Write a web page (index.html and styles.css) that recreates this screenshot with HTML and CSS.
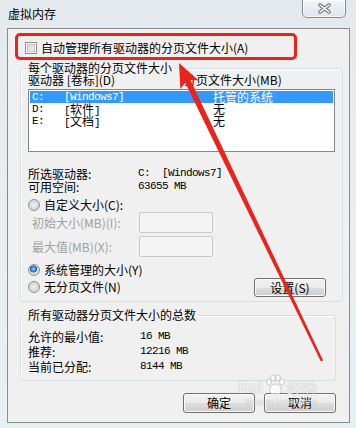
FILE: index.html
```html
<!DOCTYPE html>
<html lang="zh-CN">

<head>
    <meta charset="UTF-8">
    <meta name="viewport" content="width=device-width, initial-scale=1.0">
    <title>虚拟内存</title>

    <link rel="stylesheet" href="styles.css">
</head>

<body>
    <div class="window">
        <div class="titlebar">
            <span class="title">虚拟内存</span>
            <button class="close">
                <svg width="13" height="11" viewBox="0 0 13 11">
                    <path d="M2 2 L11 9 M11 2 L2 9" stroke="#6f7b86" stroke-width="3.6" stroke-linecap="round" />
                    <path d="M2 2 L11 9 M11 2 L2 9" stroke="#ffffff" stroke-width="1.5" stroke-linecap="round" />
                </svg>
            </button>
        </div>

        <div class="client">
            <label class="auto-row">
                <span class="checkbox"></span>
                <span>自动管理所有驱动器的分页文件大小(A)</span>
            </label>

            <fieldset class="group drives">
                <legend>每个驱动器的分页文件大小</legend>
                <div class="list-head">
                    <span class="head-drive">驱动器 [卷标](D)</span>
                    <span>分页文件大小(MB)</span>
                </div>
                <div class="listbox">
                    <div class="row selected">
                        <span class="c-drive mono">C:</span>
                        <span class="c-label mono">[Windows7]</span>
                        <span>托管的系统</span>
                    </div>
                    <div class="row">
                        <span class="c-drive mono">D:</span>
                        <span class="c-label"><span class="mono">[</span>软件<span class="mono">]</span></span>
                        <span>无</span>
                    </div>
                    <div class="row">
                        <span class="c-drive mono">E:</span>
                        <span class="c-label"><span class="mono">[</span>文档<span class="mono">]</span></span>
                        <span>无</span>
                    </div>
                </div>

                <div class="info">
                    <span>所选驱动器:</span>
                    <span class="mono">C:&nbsp;&nbsp;[Windows7]</span>
                    <span>可用空间:</span>
                    <span class="mono">63655 MB</span>
                </div>

                <label class="radio-row custom">
                    <span class="radio"></span>
                    <span>自定义大小(C):</span>
                </label>
                <div class="size-row first">
                    <span class="disabled">初始大小(MB)(I):</span>
                    <span class="textbox"></span>
                </div>
                <div class="size-row">
                    <span class="disabled">最大值(MB)(X):</span>
                    <span class="textbox"></span>
                </div>

                <div class="mode-block">
                    <div class="mode-list">
                        <label class="radio-row">
                            <span class="radio checked"></span>
                            <span>系统管理的大小(Y)</span>
                        </label>
                        <label class="radio-row second">
                            <span class="radio"></span>
                            <span>无分页文件(N)</span>
                        </label>
                    </div>
                    <button class="btn set-btn">设置(S)</button>
                </div>
            </fieldset>

            <fieldset class="group totals">
                <legend>所有驱动器分页文件大小的总数</legend>
                <div class="totals-grid">
                    <span>允许的最小值:</span>
                    <span class="mono">16 MB</span>
                    <span>推荐:</span>
                    <span class="mono">12216 MB</span>
                    <span>当前已分配:</span>
                    <span class="mono">8144 MB</span>
                </div>
            </fieldset>

            <div class="actions">
                <button class="btn">确定</button>
                <button class="btn">取消</button>
            </div>
        </div>

        <!-- 標註框與箭頭 -->
        <div class="mark-box"></div>
        <svg class="mark-arrow" width="356" height="428" viewBox="0 0 356 428">
            <polygon points="184.1,80.5 189.5,77.9 323.1,360.5 320.9,361.5" fill="#e8241b" />
            <polygon points="179,63 198.4,80.3 187.2,80.1 180.4,88.9" fill="#e8241b" />
        </svg>

        <div class="watermark">
            <div class="wm-top">
                <span class="wm-bai">Bai</span>
                <svg class="wm-paw" width="22" height="22" viewBox="0 0 22 22">
                    <g fill="rgba(255,255,255,0.85)" stroke="rgba(120,120,120,0.45)" stroke-width="0.8">
                        <ellipse cx="5" cy="8" rx="2.4" ry="3" />
                        <ellipse cx="9" cy="4" rx="2.4" ry="3" />
                        <ellipse cx="14" cy="4" rx="2.4" ry="3" />
                        <ellipse cx="18" cy="8" rx="2.4" ry="3" />
                        <path d="M11.5 10 C7 10 5 15 6 18 C7 21 10 19.5 11.5 19.5 C13 19.5 16 21 17 18 C18 15 16 10 11.5 10 Z" />
                    </g>
                </svg>
                <span class="wm-jy">经验</span>
            </div>
            <div class="wm-url">jingyan.baidu.com</div>
        </div>
    </div>
</body>

</html>
```

FILE: styles.css
```css
body {
    margin: 0;
    font-family: "Noto Sans CJK SC", "Noto Sans", sans-serif;
    font-size: 12px;
    color: #000000;
}

.window {
    position: relative;
    width: 356px;
    height: 428px;
    overflow: hidden;

    background: linear-gradient(to bottom, #e4e9ee 0%, #e9eef2 60%, #e4f1f4 100%);

    display: flex;
    flex-direction: column;
}

.mono {
    font-family: "Liberation Mono", monospace;
    font-size: 11px;
    letter-spacing: -0.6px;
}

/* 標題列 */
.titlebar {
    height: 28px;
    flex: none;
    padding: 0 10px 0 8px;

    display: flex;
    justify-content: space-between;
    align-items: flex-start;
}

.titlebar .title {
    margin-top: 8px;
    line-height: 12px;
}

.titlebar .close {
    width: 44px;
    height: 18px;
    padding: 0;

    border: 1px solid #7f8b97;
    border-top: none;
    border-radius: 0 0 5px 5px;
    background: linear-gradient(to bottom, #f4f6f8, #dfe5ea);
    box-shadow: inset 0 0 0 1px rgba(255, 255, 255, 0.7);

    display: flex;
    justify-content: center;
    align-items: center;
}

/* 內容區 */
.client {
    box-sizing: border-box;
    width: 343px;
    height: 395px;
    margin-left: 7px;
    padding: 12px 0 0 12px;

    border: 1px solid #8b8b8b;
    background-color: #f0f0f0;
}

.auto-row {
    height: 13px;
    margin-left: 5px;

    display: flex;
    align-items: center;
    gap: 4px;
    line-height: 13px;
}

.checkbox {
    box-sizing: border-box;
    width: 12px;
    height: 12px;

    border: 1px solid #8e8f8f;
    background: linear-gradient(135deg, #cfcfcf, #f6f6f6);
    box-shadow: inset 0 0 0 1px #f4f4f4, inset 0 0 0 2px #c8c8c8;
}

/* 群組框 */
.group {
    box-sizing: border-box;
    margin: 0;
    min-width: 0;
    padding: 0 7px 4px;

    border: 1px solid #d5dfe5;
    border-radius: 3px;
    box-shadow: inset 1px 1px 0 #ffffff;
}

.group legend {
    padding: 0 2px;
    margin-left: -2px;
    line-height: 12px;
}

.drives {
    width: 323px;
    margin-top: 8px;
}

.list-head {
    display: flex;
    line-height: 12px;
}

.head-drive {
    width: 156px;
}

.listbox {
    box-sizing: border-box;
    height: 63px;
    margin-top: 3px;
    padding: 1px;

    border: 1px solid #828790;
    background-color: #ffffff;
}

.listbox .row {
    height: 12px;
    padding-left: 2px;
    line-height: 12px;

    display: flex;
}

.listbox .row.selected {
    background-color: #3399ff;
    color: #ffffff;
}

.c-drive {
    width: 32px;
}

.c-label {
    width: 149px;
}

.info {
    margin-top: 15px;
    line-height: 13px;

    display: grid;
    grid-template-columns: 110px auto;
}

.radio-row {
    height: 12px;
    line-height: 12px;

    display: flex;
    align-items: center;
    gap: 4px;
}

.radio-row.custom {
    margin-top: 6px;
}

.radio-row.second {
    margin-top: 5px;
}

.radio {
    box-sizing: border-box;
    width: 12px;
    height: 12px;

    border: 1px solid #8e8f8f;
    border-radius: 50%;
    background: radial-gradient(circle at 50% 50%, #f2f2f2 0%, #d6d6d6 60%, #f6f6f6 100%);
}

.radio.checked {
    background:
        radial-gradient(circle at 45% 40%, #9fd0ff 0%, #3a86d8 28%, #1d5fa8 42%, transparent 45%),
        radial-gradient(circle at 50% 50%, #f2f2f2 0%, #d6d6d6 60%, #f6f6f6 100%);
}

.size-row {
    height: 21px;
    margin-top: 3px;
    padding-left: 4px;

    display: grid;
    grid-template-columns: 107px 74px;
    align-items: center;
}

.size-row.first {
    margin-top: 1px;
}

.disabled {
    color: #a0a0a0;
}

.textbox {
    box-sizing: border-box;
    height: 21px;

    border: 1px solid #c9c9c9;
    border-radius: 2px;
    background-color: #f4f4f4;
}

.mode-block {
    height: 33px;
    margin-top: 7px;

    display: flex;
    justify-content: space-between;
}

.btn {
    box-sizing: border-box;
    width: 72px;
    height: 20px;
    padding: 0;

    font-family: inherit;
    font-size: 12px;
    line-height: 16px;
    color: #000000;

    border: 1px solid #707070;
    border-radius: 3px;
    background: linear-gradient(to bottom, #f2f2f2 0%, #ebebeb 50%, #dddddd 51%, #cfcfcf 100%);
    box-shadow: inset 0 0 0 1px #fbfbfb;
}

.set-btn {
    align-self: flex-end;
    height: 19px;
    margin-right: 9px;
}

.totals {
    width: 316px;
    margin-top: 7px;
    padding-top: 8px;
    padding-bottom: 6px;
}

.totals-grid {
    line-height: 15px;

    display: grid;
    grid-template-columns: 112px auto;
}

.actions {
    margin-top: 12px;
    padding-right: 13px;

    display: flex;
    justify-content: flex-end;
    gap: 9px;
}

/* 標註 */
.mark-box {
    position: absolute;
    left: 15px;
    top: 33px;
    width: 282px;
    height: 27px;
    box-sizing: border-box;

    border: 3px solid #e8241b;
    border-radius: 5px;
}

.mark-arrow {
    position: absolute;
    left: 0;
    top: 0;
}

.watermark {
    position: absolute;
    left: 238px;
    top: 374px;

    color: rgba(255, 255, 255, 0.85);
    text-shadow: 0 0 1px rgba(90, 90, 90, 0.55);
}

.wm-top {
    display: flex;
    align-items: flex-end;
    gap: 1px;
}

.wm-bai {
    font-family: "Liberation Sans", sans-serif;
    font-weight: bold;
    font-size: 16px;
    line-height: 16px;
}

.wm-jy {
    font-size: 15px;
    line-height: 16px;
}

.wm-url {
    margin: 2px 0 0 8px;
    font-family: "Liberation Sans", sans-serif;
    font-size: 8px;
    line-height: 8px;
    letter-spacing: 0.4px;
}
```
